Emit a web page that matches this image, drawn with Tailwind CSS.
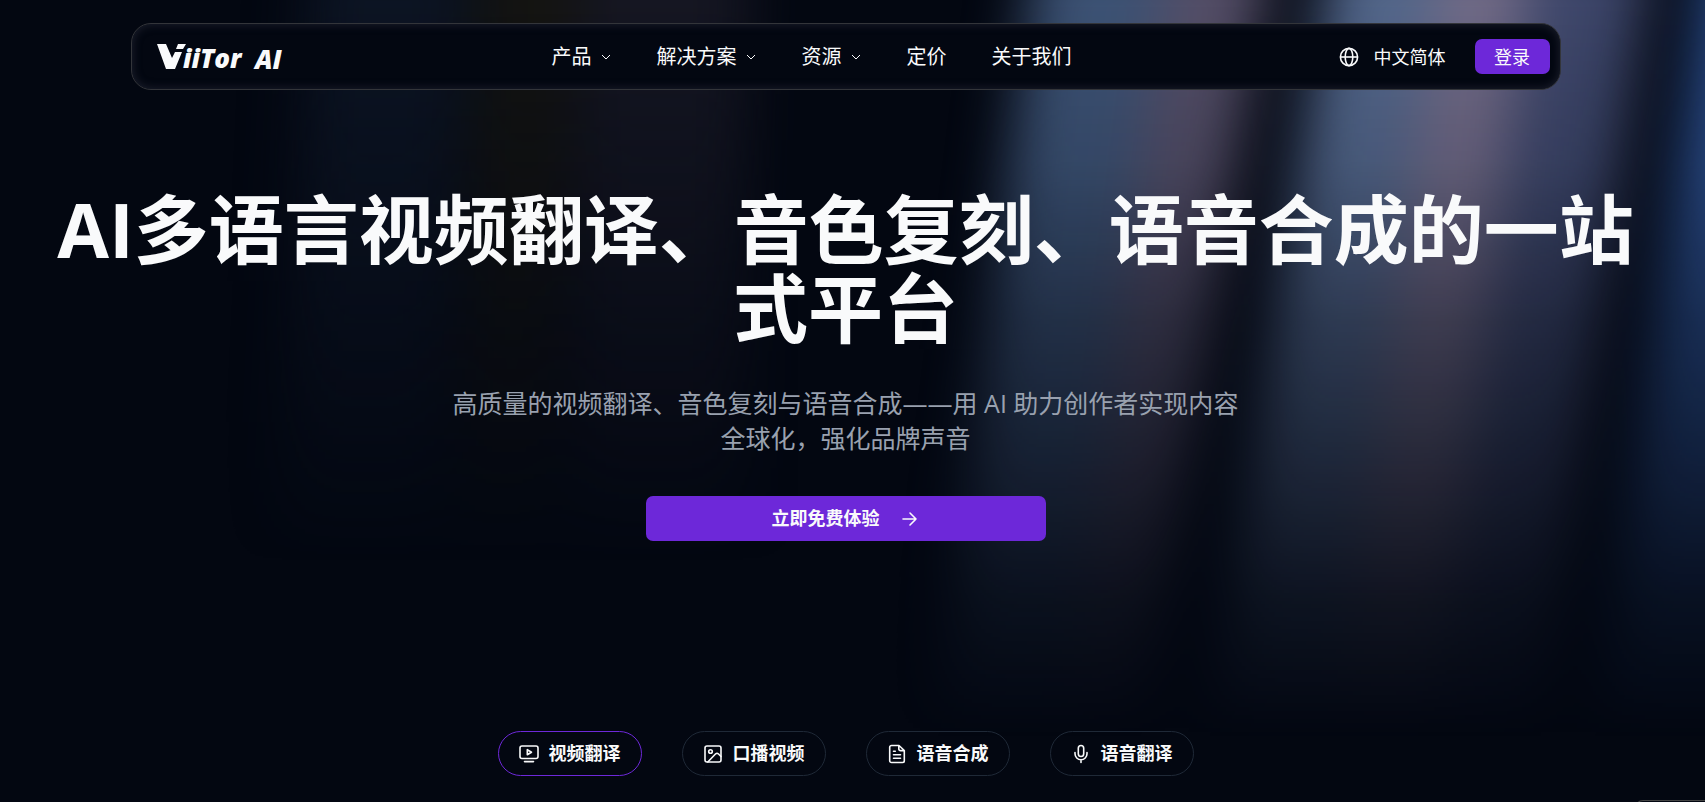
<!DOCTYPE html>
<html lang="zh-CN">
<head>
  <meta charset="UTF-8" />
  <meta name="viewport" content="width=device-width, initial-scale=1" />
  <title>ViiTor AI</title>
  <script src="https://cdn.jsdelivr.net/npm/@tailwindcss/browser@4"></script>
</head>
<body class="relative min-h-screen overflow-hidden bg-[#030711] pr-[14px] font-['Open_Sans','Noto_Sans_CJK_SC',sans-serif] text-gray-50">

  <!-- Light beams -->
  <svg class="absolute inset-0 h-full w-full" viewBox="0 0 1705 802" preserveAspectRatio="none" aria-hidden="true">
    <defs>
      <filter id="soft" x="-20%" y="-20%" width="140%" height="140%" color-interpolation-filters="sRGB"><feGaussianBlur stdDeviation="28 20" /></filter>
      <linearGradient id="fade" x1="0" y1="0" x2="0" y2="1">
        <stop offset="0" stop-color="#fff" />
        <stop offset="0.2" stop-color="#fff" stop-opacity="0.86" />
        <stop offset="0.4" stop-color="#fff" stop-opacity="0.54" />
        <stop offset="0.6" stop-color="#fff" stop-opacity="0.31" />
        <stop offset="0.75" stop-color="#fff" stop-opacity="0.13" />
        <stop offset="0.92" stop-color="#fff" stop-opacity="0" />
      </linearGradient>
      <linearGradient id="fade-left" x1="0" y1="0" x2="0" y2="1">
        <stop offset="0" stop-color="#fff" />
        <stop offset="0.7" stop-color="#fff" stop-opacity="0" />
      </linearGradient>
      <mask id="beams" style="mask-type:alpha"><rect width="1705" height="802" fill="url(#fade)" /></mask>
      <mask id="beams-left" style="mask-type:alpha"><rect width="1705" height="802" fill="url(#fade-left)" /></mask>
    </defs>
    <g mask="url(#beams-left)">
      <g filter="url(#soft)">
        <polygon points="310,-40 470,-40 430,802 270,802" fill="#0c1423" />
        <polygon points="480,-40 580,-40 530,802 450,802" fill="#141411" />
        <polygon points="580,-40 750,-40 740,802 560,802" fill="#151622" />
      </g>
    </g>
    <g mask="url(#beams)">
      <g filter="url(#soft)">
        <polygon points="1035,-40 1190,-40 1080,802 930,802" fill="#3c5274" />
        <polygon points="1165,-40 1270,-40 1130,802 1060,802" fill="#544e67" />
        <polygon points="1330,-40 1470,-40 1350,802 1200,802" fill="#52668a" />
        <polygon points="1440,-40 1560,-40 1450,802 1330,802" fill="#716a86" />
        <polygon points="1530,-40 1650,-40 1530,802 1430,802" fill="#3d466a" />
        <polygon points="1710,-60 1860,-60 1860,850 1580,850" fill="#2c5090" />
      </g>
    </g>
  </svg>

  <header class="relative mx-auto mt-[23px] flex h-[67px] w-[1430px] max-w-[calc(100%-32px)] items-center justify-between rounded-[20px] border border-[#33353a] bg-[#030711] pr-[10px] pl-[25px] shadow-[inset_0_0_10px_#1f2230]">
    <a href="#" aria-label="ViiTor AI" class="block">
      <svg class="h-11 w-[140px] overflow-visible fill-gray-50" viewBox="0 0 140 44" aria-hidden="true">
        <path d="M0 9h9l6 14 3-6h7l-7 17H9zM21 9h8l-3 5h-7z" />
        <text x="26" y="33" font-size="26" font-weight="800" font-style="italic">iiTor</text>
        <text x="98" y="34" font-size="26" font-weight="800" font-style="italic">AI</text>
      </svg>
    </a>

    <nav class="absolute left-1/2 flex -translate-x-[294px] items-center gap-[45px] text-[20px] leading-7">
      <button class="flex items-center gap-2">产品
        <svg class="h-3 w-3" viewBox="0 0 12 12" fill="none" stroke="currentColor"><path d="M2 4l4 4 4-4" /></svg>
      </button>
      <button class="flex items-center gap-2">解决方案
        <svg class="h-3 w-3" viewBox="0 0 12 12" fill="none" stroke="currentColor"><path d="M2 4l4 4 4-4" /></svg>
      </button>
      <button class="flex items-center gap-2">资源
        <svg class="h-3 w-3" viewBox="0 0 12 12" fill="none" stroke="currentColor"><path d="M2 4l4 4 4-4" /></svg>
      </button>
      <a href="#">定价</a>
      <a href="#">关于我们</a>
    </nav>

    <div class="flex items-center text-[18px] leading-7">
      <button class="flex items-center gap-[15px]">
        <svg class="h-5 w-5" viewBox="0 0 20 20" fill="none" stroke="currentColor" stroke-width="1.6"><circle cx="10" cy="10" r="8.6" /><ellipse cx="10" cy="10" rx="3.8" ry="8.6" /><path d="M1.4 10h17.2" /></svg>
        中文简体
      </button>
      <button class="ml-[29px] h-[35px] w-[75px] rounded-[7px] bg-[#6d28d9]">登录</button>
    </div>
  </header>

  <main class="relative flex flex-col items-center text-center">
    <h1 class="mt-[100px] max-w-[1640px] text-[75px] leading-[79px] font-bold">AI多语言视频翻译、音色复刻、语音合成的一站式平台</h1>
    <p class="mt-[38px] max-w-[810px] text-[25px] leading-[35px] text-gray-400">高质量的视频翻译、音色复刻与语音合成——用 AI 助力创作者实现内容全球化，强化品牌声音</p>
    <button class="mt-10 flex h-[45px] w-[400px] items-center justify-center gap-5 rounded-[7px] bg-[#6d28d9] text-[18px] font-bold">
      立即免费体验
      <svg class="h-5 w-5" viewBox="0 0 20 20" fill="none" stroke="currentColor" stroke-width="1.6" stroke-linecap="round" stroke-linejoin="round"><path d="M3 10h13M10 4l6 6-6 6" /></svg>
    </button>

    <div class="mt-[190px] flex gap-10 text-[18px] font-bold">
      <button class="flex h-[45px] w-[144px] items-center justify-center gap-[10px] rounded-full border border-[#6d28d9]">
        <svg class="h-5 w-5" viewBox="0 0 20 20" fill="none" stroke="currentColor" stroke-width="1.6" stroke-linecap="round" stroke-linejoin="round"><rect x="1" y="2" width="18" height="12.5" rx="2" /><path d="M5.5 17.6h9M8.3 5.6v5.2l4.2-2.6z" /></svg>
        视频翻译
      </button>
      <button class="flex h-[45px] w-[144px] items-center justify-center gap-[10px] rounded-full border border-[#1f2937]">
        <svg class="h-5 w-5" viewBox="0 0 20 20" fill="none" stroke="currentColor" stroke-width="1.6" stroke-linecap="round" stroke-linejoin="round"><rect x="2" y="2" width="16" height="16" rx="2" /><circle cx="7.5" cy="7.5" r="1.8" /><path d="M18 12.5l-2.7-2.7a2 2 0 0 0-2.6 0L4.8 18" /></svg>
        口播视频
      </button>
      <button class="flex h-[45px] w-[144px] items-center justify-center gap-[10px] rounded-full border border-[#1f2937]">
        <svg class="h-5 w-5" viewBox="0 0 20 20" fill="none" stroke="currentColor" stroke-width="1.6" stroke-linecap="round" stroke-linejoin="round"><path d="M12 1.5H4.5A1.8 1.8 0 0 0 2.7 3.3v13.4a1.8 1.8 0 0 0 1.8 1.8h11a1.8 1.8 0 0 0 1.8-1.8V6.5zM11.8 1.5v3.4a1.7 1.7 0 0 0 1.7 1.7h3.7M6.5 7.3h1.8M6.5 10.8h7M6.5 14.3h7" /></svg>
        语音合成
      </button>
      <button class="flex h-[45px] w-[144px] items-center justify-center gap-[10px] rounded-full border border-[#1f2937]">
        <svg class="h-5 w-5" viewBox="0 0 20 20" fill="none" stroke="currentColor" stroke-width="1.6" stroke-linecap="round" stroke-linejoin="round"><rect x="7.3" y="1.5" width="5.4" height="11" rx="2.7" /><path d="M4 8.5v1.2a6 6 0 0 0 12 0V8.5M10 15.7v2.8" /></svg>
        语音翻译
      </button>
    </div>
  </main>

  <!-- Top edge of the floating widget -->
  <div class="fixed right-0 -bottom-10 h-[42px] w-[70px] rounded-tl-lg border-t border-l border-[#444] bg-[#030711]"></div>
</body>
</html>
